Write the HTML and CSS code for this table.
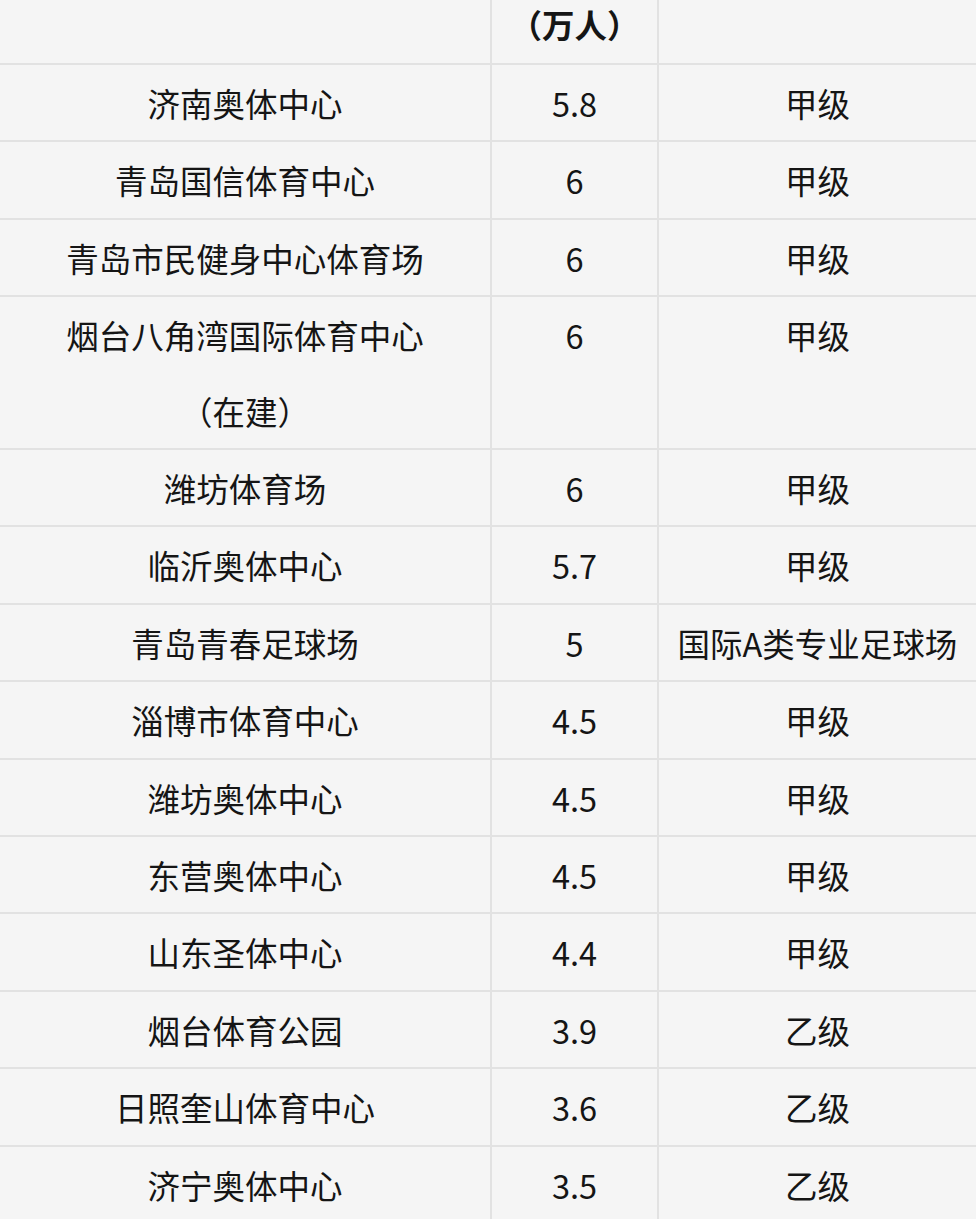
FILE: index.html
```html
<!DOCTYPE html>
<html lang="zh-CN">
<head>
<meta charset="utf-8">
<title>山东体育场</title>
<link rel="stylesheet" href="styles.css">
</head>
<body>
<table class="stadiums">
  <colgroup>
    <col class="c-name">
    <col class="c-cap">
    <col class="c-level">
  </colgroup>
  <thead>
    <tr class="head">
      <th></th>
      <th>（万人）</th>
      <th></th>
    </tr>
  </thead>
  <tbody>
    <tr><td>济南奥体中心</td><td>5.8</td><td>甲级</td></tr>
    <tr><td>青岛国信体育中心</td><td>6</td><td>甲级</td></tr>
    <tr><td>青岛市民健身中心体育场</td><td>6</td><td>甲级</td></tr>
    <tr><td>烟台八角湾国际体育中心<br>（在建）</td><td class="top">6</td><td class="top">甲级</td></tr>
    <tr><td>潍坊体育场</td><td>6</td><td>甲级</td></tr>
    <tr><td>临沂奥体中心</td><td>5.7</td><td>甲级</td></tr>
    <tr><td>青岛青春足球场</td><td>5</td><td>国际A类专业足球场</td></tr>
    <tr><td>淄博市体育中心</td><td>4.5</td><td>甲级</td></tr>
    <tr><td>潍坊奥体中心</td><td>4.5</td><td>甲级</td></tr>
    <tr><td>东营奥体中心</td><td>4.5</td><td>甲级</td></tr>
    <tr><td>山东圣体中心</td><td>4.4</td><td>甲级</td></tr>
    <tr><td>烟台体育公园</td><td>3.9</td><td>乙级</td></tr>
    <tr><td>日照奎山体育中心</td><td>3.6</td><td>乙级</td></tr>
    <tr><td>济宁奥体中心</td><td>3.5</td><td>乙级</td></tr>
  </tbody>
</table>
</body>
</html>
```
FILE: styles.css
```css
html, body {
  margin: 0;
  padding: 0;
  background: #f5f5f5;
  overflow: hidden;
}

.stadiums {
  width: 976px;
  border-collapse: collapse;
  table-layout: fixed;
  font-family: "Noto Sans CJK SC", "Noto Sans", sans-serif;
  font-size: 32.5px;
  color: #151515;
}

.c-name { width: 491px; }
.c-cap { width: 167px; }
.c-level { width: 318px; }

.stadiums th,
.stadiums td {
  padding: 0;
  text-align: center;
  vertical-align: middle;
  border: 2px solid #e2e2e2;
  line-height: 75.4px;
  white-space: nowrap;
}

.stadiums th {
  font-weight: 700;
  border-top: none;
  line-height: 48px;
  padding-bottom: 15px;
}

.stadiums tr > :first-child { border-left: none; }
.stadiums tr > :last-child { border-right: none; }

.stadiums td.top { vertical-align: top; }
```
